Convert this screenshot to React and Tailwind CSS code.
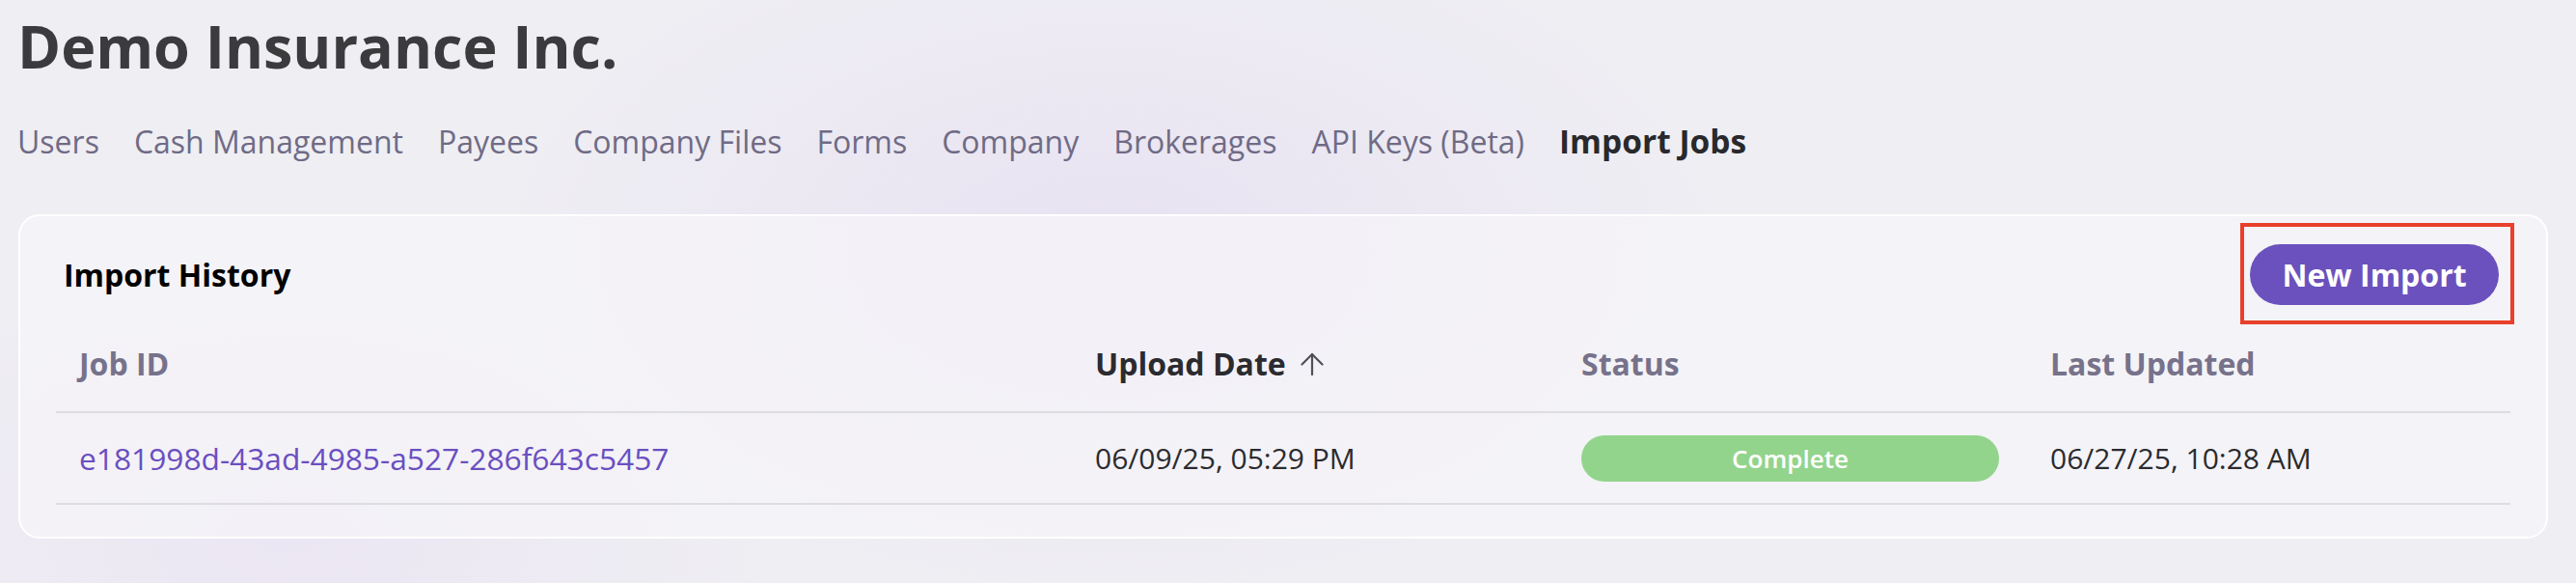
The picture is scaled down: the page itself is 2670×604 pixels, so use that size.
import React from "react";

const navItems = [
  "Users",
  "Cash Management",
  "Payees",
  "Company Files",
  "Forms",
  "Company",
  "Brokerages",
  "API Keys (Beta)",
  "Import Jobs",
];

const jobs = [
  {
    id: "e181998d-43ad-4985-a527-286f643c5457",
    uploaded: "06/09/25, 05:29 PM",
    status: "Complete",
    updated: "06/27/25, 10:28 AM",
  },
];

// Thin sort arrow next to the active column.
const SortArrow = () => (
  <svg width="24" height="24" viewBox="0 0 24 24" fill="none" stroke="#505055" strokeWidth="2.2" strokeLinecap="round" strokeLinejoin="round">
    <path d="M12 23V2" />
    <path d="M1.5 12.5 12 2l10.5 10.5" />
  </svg>
);

const App = () => {
  const active = "Import Jobs";

  return (
    <div
      className="min-h-[604px] w-full bg-[#efeef3] bg-[radial-gradient(ellipse_900px_500px_at_1150px_260px,#e8e2f2_0%,rgba(232,226,242,0)_70%),radial-gradient(ellipse_700px_400px_at_300px_560px,#ebe6f3_0%,rgba(235,230,243,0)_70%)] pl-[18px] pr-[29px] pt-[17px]"
      style={{ fontFamily: '"Open Sans", "Liberation Sans", sans-serif' }}
    >
      {/* Page title */}
      <h1 className="text-[61px] leading-none font-bold text-[#3b3b3e]">
        Demo Insurance Inc.
      </h1>

      {/* Tabs */}
      <nav className="mt-[52px] flex h-[32px] items-baseline gap-[36px]">
        {navItems.map((item) => (
          <span
            key={item}
            className={`leading-none ${
              item === active ? "text-[33.5px] font-bold text-[#29292d]" : "text-[32px] text-[#6f6b85]"
            }`}
          >
            {item}
          </span>
        ))}
      </nav>

      {/* Import history card */}
      <div className="mt-[60px] ml-px rounded-[22px] border-2 border-white bg-[#f5f4f7]/80 pt-[29px] pb-[33px] pl-[37px] pr-[37px]">
        <div className="flex items-center justify-between pl-[8px] pr-[12px]">
          <h2 className="text-[32px] leading-none font-bold text-black">Import History</h2>
          <div className="relative">
            <button className="h-[63px] w-[258px] rounded-full bg-[#6b51bd] text-[32px] font-bold text-white">
              New Import
            </button>
            {/* red annotation box */}
            <div className="pointer-events-none absolute -top-[22px] -bottom-[20px] -left-[10px] -right-[16px] border-4 border-[#e8402a]" />
          </div>
        </div>

        {/* Table */}
        <div className="mt-[12px]">
          <div className="flex h-[100px] items-center border-b-2 border-[#dddce0] text-[32px] font-bold leading-none">
            <div className="w-[1053px] pl-[24px] text-[#77728b]">Job ID</div>
            <div className="flex w-[504px] items-center gap-[15px] pl-[24px] text-[#2b2b2f]">
              <span>Upload Date</span>
              <SortArrow />
            </div>
            <div className="w-[486px] pl-[24px] text-[#77728b]">Status</div>
            <div className="flex-1 pl-[24px] text-[#77728b]">Last Updated</div>
          </div>
          {jobs.map((job) => (
            <div key={job.id} className="flex h-[95px] items-center border-b-2 border-[#dddce0] text-[30px] leading-none">
              <div className="w-[1053px] pl-[24px] text-[31.7px] text-[#6a4fc0]">{job.id}</div>
              <div className="w-[504px] pl-[24px] text-[#2b2b2f]">{job.uploaded}</div>
              <div className="w-[486px] pl-[24px]">
                <div className="flex h-[48px] w-[433px] items-center justify-center rounded-full bg-[#93d48d] text-[26px] font-semibold text-white">
                  {job.status}
                </div>
              </div>
              <div className="flex-1 pl-[24px] text-[#2b2b2f]">{job.updated}</div>
            </div>
          ))}
        </div>
      </div>
    </div>
  );
};

export default App;
